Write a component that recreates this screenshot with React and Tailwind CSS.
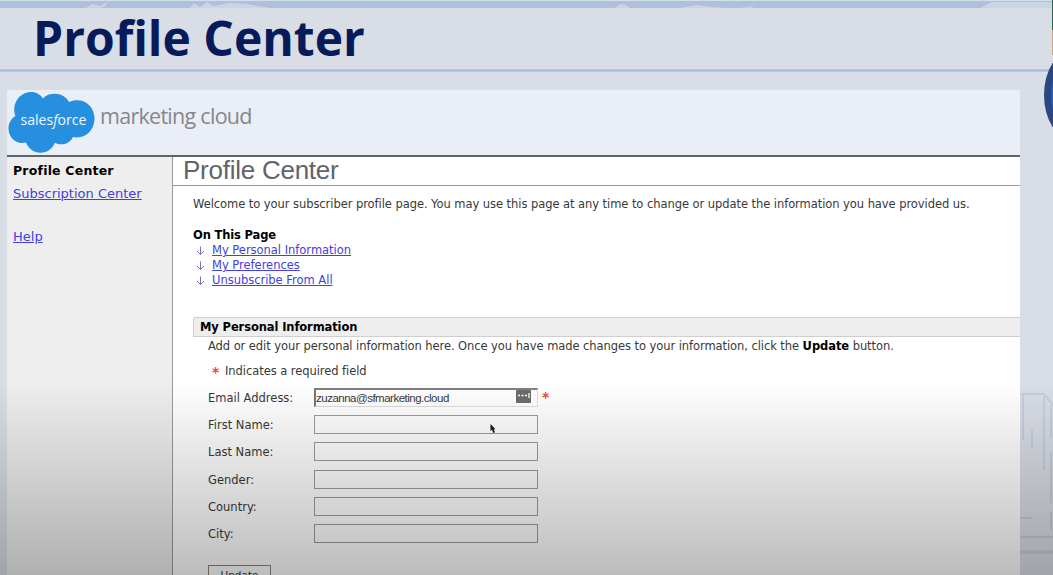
import React from "react";

const links = ["My Personal Information", "My Preferences", "Unsubscribe From All"];

const fields = ["First Name:", "Last Name:", "Gender:", "Country:", "City:"];

function SalesforceLogo() {
  return (
    <svg className="-ml-px block h-[62px] w-[88px] shrink-0" viewBox="0 0 88 62">
      <path
        d="M36 7.5C39 4.200 43 2.800 47.500 2.800C54 2.800 59.500 6 62 11C64.500 9.800 67 9.300 70 9.300C80 9.300 87.500 17 87.500 27.500C87.500 38 80 46.500 70 46.500C68.500 46.500 67.500 46.300 66 46C64 50.500 59.500 53.300 54.500 53.300C52 53.300 50 52.800 48 51.800C45.500 57.700 40 61.800 33.500 61.800C27 61.800 21.500 58 19 51.500C18 51.800 16.500 52 15 52C7.500 52 1.500 45.500 1.500 37.500C1.500 32 4.200 27.500 8.500 25C7.600 23 7.200 21 7.200 18.500C7.200 8.700 15 1 24.500 1C29.300 1 33.300 3.500 36 7.500Z"
        fill="#278fdf"
      />
      <text x="13.500" y="33.500" fill="#f1f7fd" fontFamily="Open Sans, sans-serif" fontSize="14.500" fontWeight="500" textLength="66" lengthAdjust="spacingAndGlyphs">
        sales<tspan fontStyle="italic">f</tspan>orce
      </text>
    </svg>
  );
}

function DownArrow() {
  return (
    <svg className="mr-[7px] h-[10px] w-[9px]" viewBox="0 0 9 10" fill="none" stroke="#7474b8" strokeWidth="1">
      <path d="M4.500 0.500V8.500M1 5L4.500 8.500L8 5" />
    </svg>
  );
}

function Row({ label, children }) {
  return (
    <div className="flex h-[27.200px] items-start">
      <label className="w-[106px] shrink-0 pt-[2px] text-[11.500px] leading-[17px]">{label}</label>
      {children}
    </div>
  );
}

function SlideEdge() {
  return (
    <svg className="absolute right-0 top-0 h-[575px] w-[33px]" viewBox="0 0 33 575" fill="none">
      <rect x="32" y="0" width="1" height="30" fill="#2a6557" />
      <rect x="32" y="30" width="1" height="25" fill="#c8ab86" />
      <ellipse cx="53" cy="95" rx="29" ry="45" fill="#2b4781" />
      <ellipse cx="59" cy="95" rx="28" ry="40" fill="#2e5db5" />
      <g stroke="#b5bfd0" strokeWidth="2" opacity="0.5">
        <path d="M1 394H24L33 405M3 395V440M24 396V470M12 430V448M31 405V438M31 452V503M31 512V530M1 518H12M0 537H33" />
        <path d="M0 552H33" strokeWidth="3" />
      </g>
    </svg>
  );
}

export default function App() {
  return (
    <div className="relative flex h-[575px] w-[1053px] flex-col overflow-hidden bg-[#d9dde5] font-['DejaVu_Sans',sans-serif] text-[#383838]">
      <header className="h-[90px] shrink-0">
        <div className="flex h-[8px] items-end border-t border-[#d5deea] bg-[#adc0dc]">
          <svg className="h-[7px] w-full" viewBox="0 0 1053 7" preserveAspectRatio="none">
            <path d="M86 7L92 3L100 5L108 1L104 6L98 7ZM190 7L194 2L200 6L207 1L214 5L230 2L246 3L270 7ZM615 7L620 3L626 4L630 7ZM680 7L696 4L712 6L725 7ZM738 7L748 6L755 4L750 7ZM980 7L992 1L1053 1V7Z" fill="#c9d5e6" />
          </svg>
        </div>
        <h1 className="h-[61px] pl-[33px] font-['Open_Sans',sans-serif] text-[48px] font-bold leading-[60px] text-[#071b5b]">Profile Center</h1>
        <div className="h-[3px] border-y border-[#b9c9e0] bg-[#a3b9d9]" />
      </header>
      <SlideEdge />
      <div className="ml-[7px] flex h-[485px] w-[1013px] flex-col bg-white">
        <div className="flex h-[67px] shrink-0 border-b-2 border-[#606569] bg-[#eaeef6] pl-px pt-px">
          <SalesforceLogo />
          <span className="pl-[5px] pt-[7px] font-['Open_Sans',sans-serif] text-[21.500px] leading-[36px] tracking-[-0.720px] text-[#85878c]">marketing cloud</span>
        </div>
        <div className="flex min-h-0 flex-1">
          <aside className="flex w-[166px] shrink-0 flex-col items-start border-r border-[#999] bg-[#eeeeef] pl-[6px] pt-[5px] text-[13px] leading-[18px]">
            <b className="mb-[5px] text-[12.500px] tracking-[0.200px] text-black">Profile Center</b>
            <a className="mb-[25px] text-[#4340e0] underline">Subscription Center</a>
            <a className="text-[#4340e0] underline">Help</a>
          </aside>
          <main className="min-w-0 flex-1">
            <h2 className="h-[29px] border-b border-[#999] pl-[10px] font-['Liberation_Sans',sans-serif] text-[26px] leading-[27px] tracking-[-0.250px] text-[#626469]">Profile Center</h2>
            <div className="pl-[20px] pt-[10px]">
              <p className="whitespace-nowrap text-[11.500px] leading-[17px] tracking-[-0.060px]">Welcome to your subscriber profile page. You may use this page at any time to change or update the information you have provided us.</p>
              <b className="mt-[14px] block text-[11.500px] leading-[16px] tracking-[-0.150px] text-black">On This Page</b>
              <ul className="pl-[3px]">
                {links.map((label) => (
                  <li key={label} className="flex h-[15px] items-center">
                    <DownArrow />
                    <a className="text-[11.500px] leading-[15px] tracking-[-0.020px] text-[#4340e0] underline">{label}</a>
                  </li>
                ))}
              </ul>
              <h3 className="mt-[29px] h-[20px] rounded-tl-[3px] border border-r-0 border-[#cfcfd2] bg-[#eeeeef] pl-[6px] text-[11.500px] font-bold leading-[18px] tracking-[-0.110px] text-black">My Personal Information</h3>
              <div className="pl-[15px]">
                <p className="whitespace-nowrap text-[11.500px] leading-[18px] tracking-[-0.070px]">
                  Add or edit your personal information here. Once you have made changes to your information, click the <b className="text-black">Update</b> button.
                </p>
                <p className="mt-[8px] flex h-[18px] items-center pl-[4px] text-[11.500px] tracking-[-0.060px]">
                  <b className="w-[13px] text-[14px] leading-[12px] text-[#ee4634]">*</b>
                  Indicates a required field
                </p>
                <div className="pt-[7px]">
                  <Row label="Email Address:">
                    <div className="flex h-[19px] w-[224px] items-center justify-between border border-b-[#ddd] border-l-2 border-r-[#ddd] border-l-[#777] border-t-2 border-t-[#808080] pr-[6px]">
                      <span className="font-['Liberation_Sans',sans-serif] text-[11.500px] leading-[16px] tracking-[-0.500px]">zuzanna@sfmarketing.cloud</span>
                      <svg className="-mt-[3px] h-[13px] w-[15px]" viewBox="0 0 15 13">
                        <rect width="15" height="13" rx="1" fill="#6c6c6c" />
                        <path d="M2 5.500h2M5.500 5.500h2M9 5.500h2M13 3v5" stroke="#fff" strokeWidth="1.300" />
                      </svg>
                    </div>
                    <b className="ml-[4px] text-[14px] leading-[19px] text-[#ee4634]">*</b>
                  </Row>
                  {fields.map((f) => (
                    <Row key={f} label={f}>
                      <div className="h-[19px] w-[224px] border border-[#9c9c9c]" />
                    </Row>
                  ))}
                  <div className="mt-[14px] h-[22px] w-[63px] border border-[#858585] text-center text-[10.500px] leading-[18px]">Update</div>
                </div>
              </div>
            </div>
          </main>
        </div>
      </div>
      <div className="pointer-events-none absolute inset-x-0 bottom-0 h-[195px] bg-linear-to-b from-black/0 to-black/26" />
      <svg className="absolute left-[490px] top-[424px] h-[11px] w-[7px]" viewBox="0 0 7 11">
        <path d="M0.500 0V7L2 5.700L3.300 9L5 8.300L3.600 5.200H5.500Z" fill="#151515" />
      </svg>
    </div>
  );
}
